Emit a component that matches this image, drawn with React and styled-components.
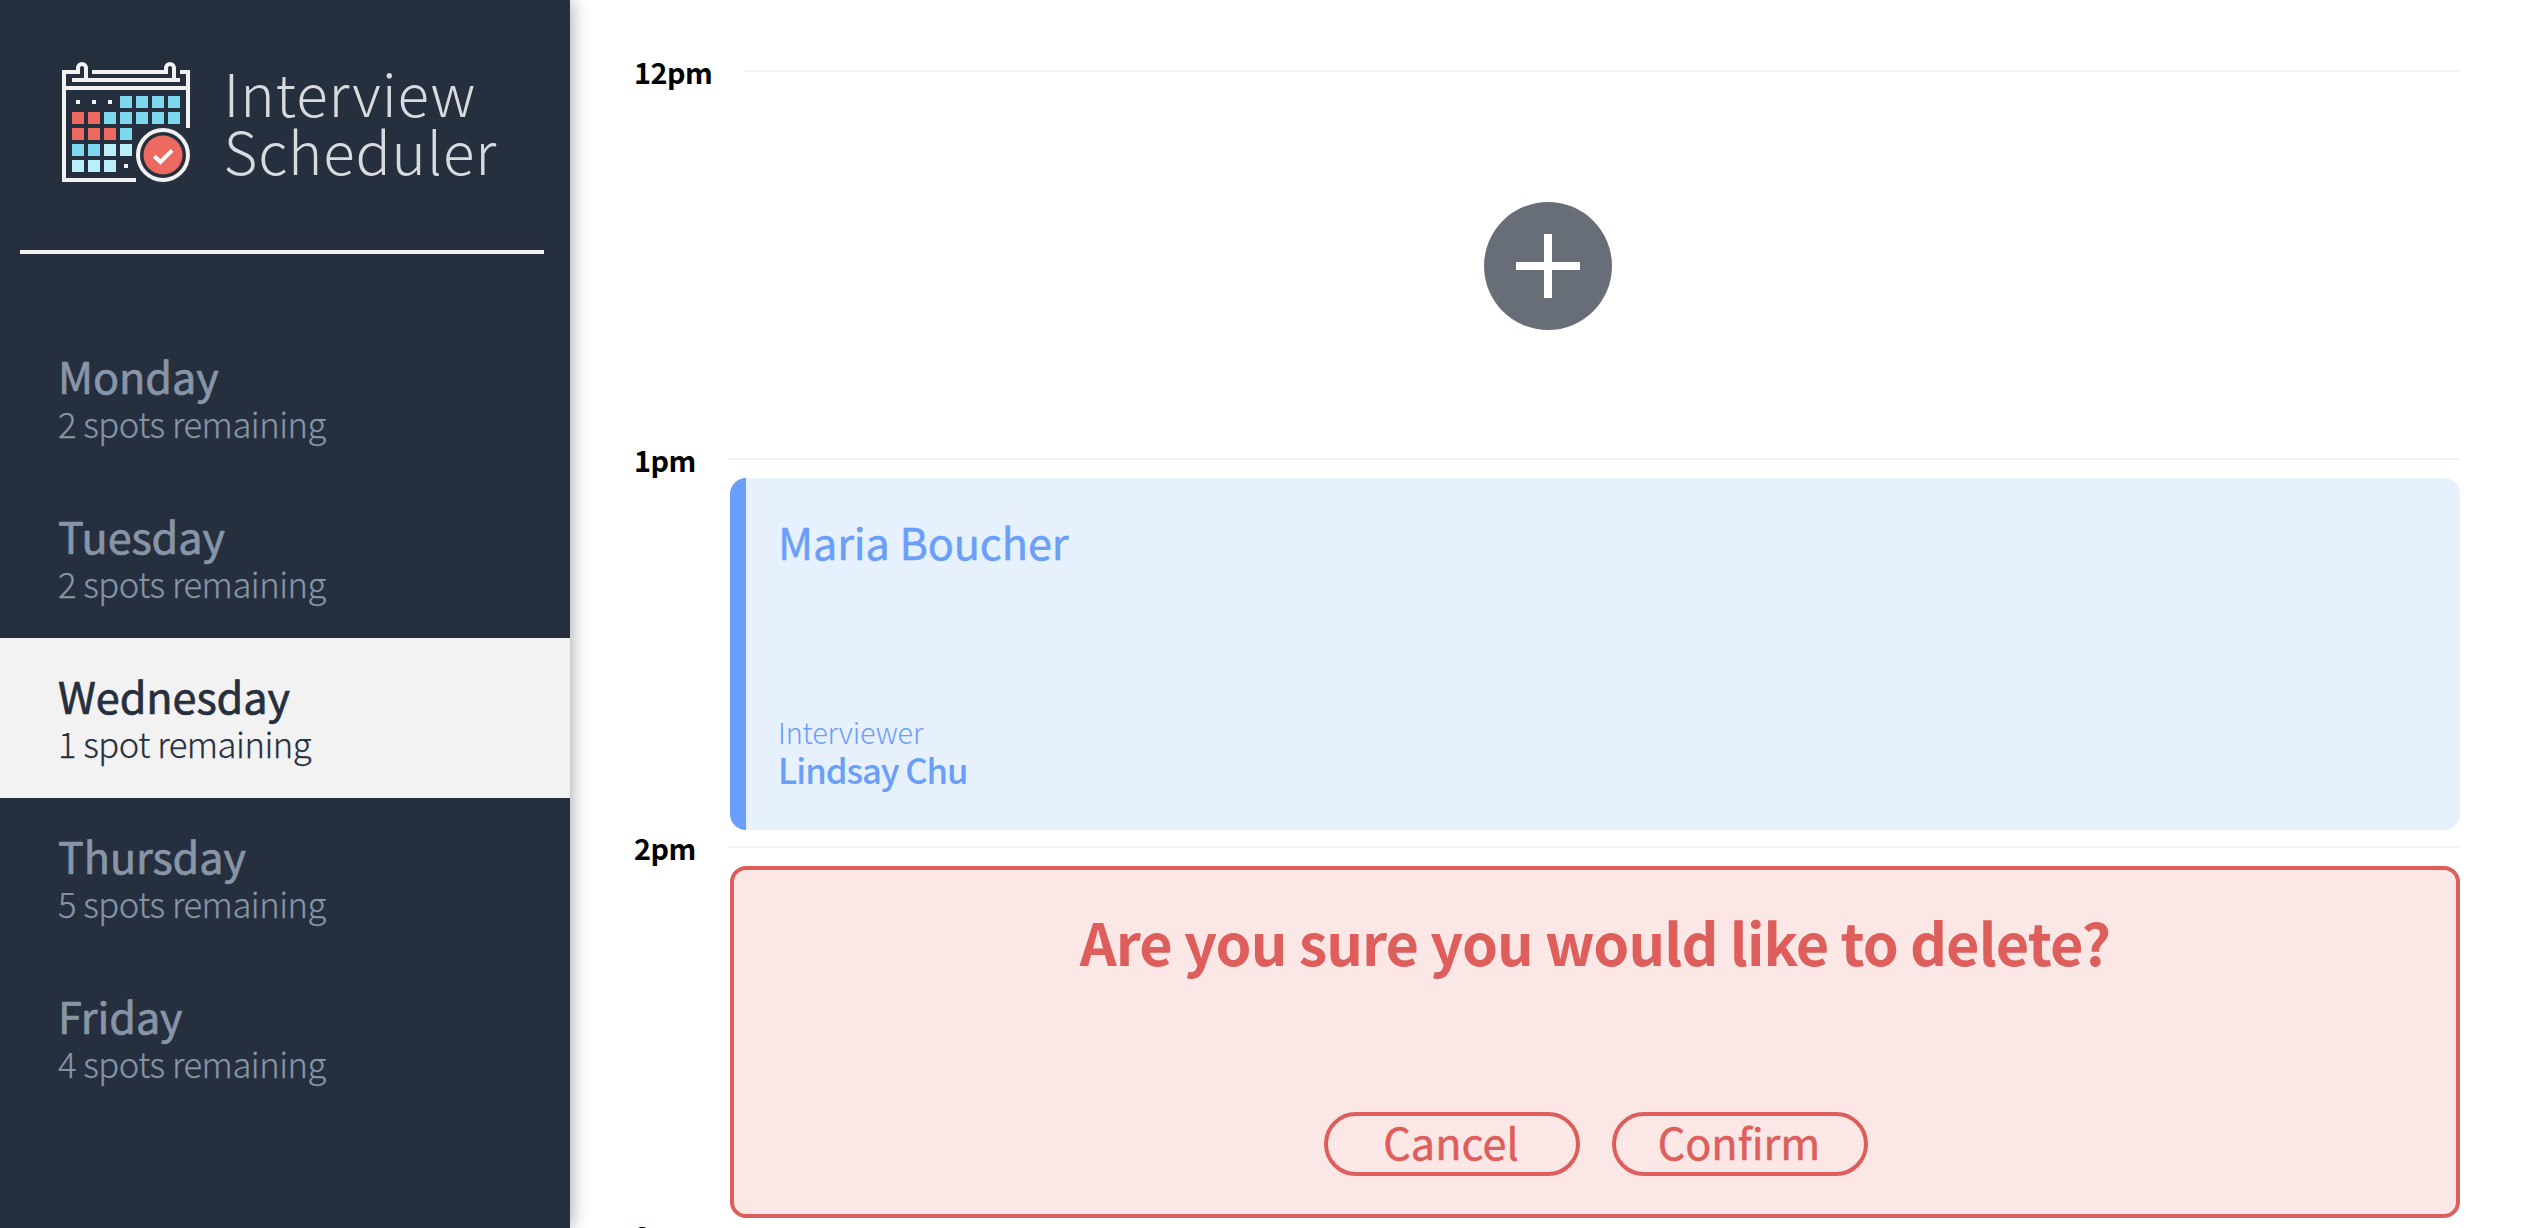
import React from "react";
import styled, { createGlobalStyle } from "styled-components";

const Global = createGlobalStyle`
  * { box-sizing: border-box; }
  body {
    margin: 0;
    overflow: hidden;
    background: #fff;
    font-family: "Noto Sans CJK JP", "Noto Sans CJK SC", "Open Sans", sans-serif;
  }
`;

const Layout = styled.div`
  display: flex;
  height: 1228px;
  overflow: hidden;
`;

const Sidebar = styled.aside`
  width: 570px;
  flex: none;
  background: #262f3d;
  box-shadow: 2px 0 16px rgba(38, 47, 61, 0.4);
`;

const Brand = styled.div`
  display: flex;
  height: 250px;
  padding: 62px 0 0 62px;
`;

const BrandName = styled.div`
  margin: 0.5px 0 0 33.5px;
  color: #d8dadd;
  font-size: 58.3px;
  font-weight: 300;
  line-height: 58px;
  letter-spacing: 0.85px;
  white-space: nowrap;
`;

const Separator = styled.hr`
  width: 524px;
  height: 4px;
  margin: 0 0 64px 20px;
  border: 0;
  background: #f2f2f2;
`;

const DayItem = styled.div`
  height: 160px;
  padding: 33px 58px 0;
  color: ${(p) => (p.$selected ? "#262f3d" : "#8795a7")};
  background: ${(p) => (p.$selected ? "#f2f2f2" : "transparent")};
`;

const DayName = styled.div`
  font-size: 43.2px;
  line-height: 48px;
  letter-spacing: -0.1px;
  -webkit-text-stroke: 0.7px currentColor;
`;

const Spots = styled.div`
  margin-top: 4px;
  font-size: 34.6px;
  line-height: 40px;
  font-weight: 300;
  letter-spacing: -0.48px;
  -webkit-text-stroke: 0.25px currentColor;
`;

const Schedule = styled.main`
  flex: 1;
  padding: 70px 62px 0 64px;
`;

const Slot = styled.section`
  height: 388px;
`;

const SlotHead = styled.header`
  display: flex;
  justify-content: space-between;
  height: 20px;
`;

const Time = styled.span`
  height: 30px;
  margin-top: -13px;
  color: #000;
  font-size: 28.8px;
  font-weight: 700;
  line-height: 30px;
  letter-spacing: -0.55px;
`;

const Rule = styled.div`
  width: ${(p) => p.$width}px;
  height: 2px;
  background: #f2f2f2;
`;

const Empty = styled.div`
  display: flex;
  padding: 112px 0 0 850px;
`;

const Card = styled.article`
  display: flex;
  flex-direction: column;
  justify-content: space-between;
  width: 1730px;
  height: 352px;
  margin-left: 96px;
  border-radius: 16px;
`;

const Booked = styled(Card)`
  padding: 38px 0 41px 32px;
  border-left: 16px solid #699ff8;
  background: #e7f0fd;
  color: #699ff8;
`;

const Student = styled.div`
  font-size: 43.2px;
  line-height: 50px;
  letter-spacing: -0.1px;
  -webkit-text-stroke: 0.5px currentColor;
`;

const Label = styled.div`
  font-size: 28.8px;
  line-height: 36px;
  font-weight: 300;
  letter-spacing: -0.15px;
`;

const Interviewer = styled.div`
  font-size: 34.6px;
  line-height: 39px;
  font-weight: 500;
  letter-spacing: -1.05px;
`;

const Confirmation = styled(Card)`
  align-items: center;
  padding: 38px 0 38px;
  border: 4px solid #de5e5b;
  background: #fae7e6;
  color: #de5e5b;
`;

const Question = styled.h1`
  margin: 0;
  font-size: 57.6px;
  font-weight: 700;
  line-height: 66px;
  letter-spacing: -0.92px;
  white-space: nowrap;
`;

const Actions = styled.div`
  display: flex;
  gap: 32px;
  padding-left: 2px;
`;

const Button = styled.button`
  width: 256px;
  height: 64px;
  padding: 0 2px 6px 0;
  border: 4px solid #de5e5b;
  border-radius: 32px;
  background: transparent;
  color: inherit;
  font: 400 43.2px/50px "Noto Sans CJK JP", "Open Sans", sans-serif;
  -webkit-text-stroke: 0.5px currentColor;
`;

const days = [
  ["Monday", "2 spots remaining"],
  ["Tuesday", "2 spots remaining"],
  ["Wednesday", "1 spot remaining"],
  ["Thursday", "5 spots remaining"],
  ["Friday", "4 spots remaining"],
];

const R = "#ed6a61";
const B = "#7cd8ef";
const L = "#bbeefa";
const calendar = [
  [null, null, null, B, B, B, B],
  [R, R, B, B, B, B, B],
  [R, R, R, B],
  [B, B, L, L],
  [L, L, L],
];

function CalendarLogo() {
  return (
    <svg width="128" height="120" viewBox="0 0 128 120" fill="none">
      <g stroke="#f2f2f2" strokeWidth="4">
        <path d="M16 10H2V118H74M30 10H104M118 10H126V66M10 18H118M2 26H126" />
        <path d="M16 12V6a4 4 0 0 1 8 0V18M104 12V6a4 4 0 0 1 8 0V18" />
        <circle cx="101" cy="93" r="25" />
      </g>
      {calendar.map((row, y) =>
        row.map((c, x) =>
          c ? <rect key={`${x}-${y}`} x={10 + x * 16} y={34 + y * 16} width="12" height="12" fill={c} /> : null
        )
      )}
      <path d="M14 38h4v4h-4zM30 38h4v4h-4zM46 38h4v4h-4zM62 102h4v4h-4z" fill="#f2f2f2" />
      <circle cx="101" cy="93" r="19.5" fill={R} />
      <path d="M92.3 94.2L98.5 99.9L110 88.4" stroke="#fff" strokeWidth="4" />
    </svg>
  );
}

function AddIcon() {
  return (
    <svg width="128" height="128" viewBox="0 0 128 128">
      <circle cx="64" cy="64" r="64" fill="#686e78" />
      <path d="M32 64H96M64 32V96" stroke="#fff" strokeWidth="8" />
    </svg>
  );
}

function TimeSlot({ time, rule = 1732, children }) {
  return (
    <Slot>
      <SlotHead>
        <Time>{time}</Time>
        <Rule $width={rule} />
      </SlotHead>
      {children}
    </Slot>
  );
}

export default function App() {
  return (
    <Layout>
      <Global />
      <Sidebar>
        <Brand>
          <CalendarLogo />
          <BrandName>
            Interview
            <br />
            Scheduler
          </BrandName>
        </Brand>
        <Separator />
        <nav>
          {days.map(([name, spots]) => (
            <DayItem key={name} $selected={name === "Wednesday"}>
              <DayName>{name}</DayName>
              <Spots>{spots}</Spots>
            </DayItem>
          ))}
        </nav>
      </Sidebar>
      <Schedule>
        <TimeSlot time="12pm" rule={1716}>
          <Empty>
            <AddIcon />
          </Empty>
        </TimeSlot>
        <TimeSlot time="1pm">
          <Booked>
            <Student>Maria Boucher</Student>
            <div>
              <Label>Interviewer</Label>
              <Interviewer>Lindsay Chu</Interviewer>
            </div>
          </Booked>
        </TimeSlot>
        <TimeSlot time="2pm">
          <Confirmation>
            <Question>Are you sure you would like to delete?</Question>
            <Actions>
              <Button>Cancel</Button>
              <Button>Confirm</Button>
            </Actions>
          </Confirmation>
        </TimeSlot>
        <TimeSlot time="3pm" />
      </Schedule>
    </Layout>
  );
}
